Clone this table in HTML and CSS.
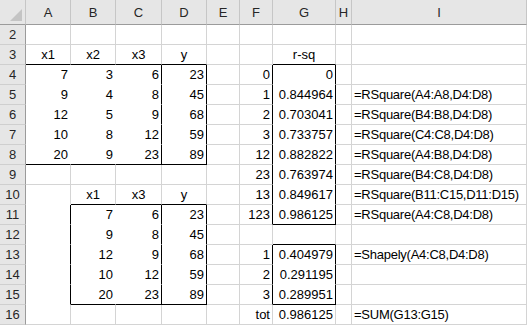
FILE: index.html
```html
<!DOCTYPE html>
<html>
<head>
    <title>Shapley - RSquare</title>
    <link rel="stylesheet" href="styles.css">
</head>
<body>
    <div class="sheet">
        <div class="row head">
            <div class="corner"><span class="tri"></span></div>
            <div class="col">A</div>
            <div class="col">B</div>
            <div class="col">C</div>
            <div class="col">D</div>
            <div class="col">E</div>
            <div class="col">F</div>
            <div class="col">G</div>
            <div class="col">H</div>
            <div class="col">I</div>
        </div>

        <div class="row">
            <div class="num">2</div>
            <div class="c"></div><div class="c"></div><div class="c"></div><div class="c"></div>
            <div class="c"></div><div class="c"></div><div class="c"></div><div class="c"></div><div class="c"></div>
        </div>

        <div class="row">
            <div class="num">3</div>
            <div class="c m kb">x1</div>
            <div class="c m kb">x2</div>
            <div class="c m kb">x3</div>
            <div class="c m kb">y</div>
            <div class="c"></div>
            <div class="c"></div>
            <div class="c m kb">r-sq</div>
            <div class="c"></div>
            <div class="c"></div>
        </div>

        <div class="row">
            <div class="num">4</div>
            <div class="c n f">7</div>
            <div class="c n f">3</div>
            <div class="c n f kr">6</div>
            <div class="c n f kr">23</div>
            <div class="c"></div>
            <div class="c n kr">0</div>
            <div class="c n f kr">0</div>
            <div class="c"></div>
            <div class="c"></div>
        </div>

        <div class="row">
            <div class="num">5</div>
            <div class="c n f">9</div>
            <div class="c n f">4</div>
            <div class="c n f kr">8</div>
            <div class="c n f kr">45</div>
            <div class="c"></div>
            <div class="c n kr">1</div>
            <div class="c n f kr">0.844964</div>
            <div class="c"></div>
            <div class="c t">=RSquare(A4:A8,D4:D8)</div>
        </div>

        <div class="row">
            <div class="num">6</div>
            <div class="c n f">12</div>
            <div class="c n f">5</div>
            <div class="c n f kr">9</div>
            <div class="c n f kr">68</div>
            <div class="c"></div>
            <div class="c n kr">2</div>
            <div class="c n f kr">0.703041</div>
            <div class="c"></div>
            <div class="c t">=RSquare(B4:B8,D4:D8)</div>
        </div>

        <div class="row">
            <div class="num">7</div>
            <div class="c n f">10</div>
            <div class="c n f">8</div>
            <div class="c n f kr">12</div>
            <div class="c n f kr">59</div>
            <div class="c"></div>
            <div class="c n kr">3</div>
            <div class="c n f kr">0.733757</div>
            <div class="c"></div>
            <div class="c t">=RSquare(C4:C8,D4:D8)</div>
        </div>

        <div class="row">
            <div class="num">8</div>
            <div class="c n f kb">20</div>
            <div class="c n f kb">9</div>
            <div class="c n f kr kb">23</div>
            <div class="c n f kr kb">89</div>
            <div class="c"></div>
            <div class="c n kr">12</div>
            <div class="c n f kr">0.882822</div>
            <div class="c"></div>
            <div class="c t">=RSquare(A4:B8,D4:D8)</div>
        </div>

        <div class="row">
            <div class="num">9</div>
            <div class="c"></div><div class="c"></div><div class="c"></div><div class="c"></div>
            <div class="c"></div>
            <div class="c n kr">23</div>
            <div class="c n f kr">0.763974</div>
            <div class="c"></div>
            <div class="c t">=RSquare(B4:C8,D4:D8)</div>
        </div>

        <div class="row">
            <div class="num">10</div>
            <div class="c hb"></div>
            <div class="c m kb">x1</div>
            <div class="c m kb">x3</div>
            <div class="c m kb">y</div>
            <div class="c"></div>
            <div class="c n kr">13</div>
            <div class="c n f kr">0.849617</div>
            <div class="c"></div>
            <div class="c t">=RSquare(B11:C15,D11:D15)</div>
        </div>

        <div class="row">
            <div class="num">11</div>
            <div class="c f kr"></div>
            <div class="c n f">7</div>
            <div class="c n f kr">6</div>
            <div class="c n f kr">23</div>
            <div class="c"></div>
            <div class="c n kr">123</div>
            <div class="c n f kr kb">0.986125</div>
            <div class="c"></div>
            <div class="c t">=RSquare(A4:C8,D4:D8)</div>
        </div>

        <div class="row">
            <div class="num">12</div>
            <div class="c f kr"></div>
            <div class="c n f">9</div>
            <div class="c n f kr">8</div>
            <div class="c n f kr">45</div>
            <div class="c"></div>
            <div class="c"></div>
            <div class="c kb"></div>
            <div class="c"></div>
            <div class="c"></div>
        </div>

        <div class="row">
            <div class="num">13</div>
            <div class="c f kr"></div>
            <div class="c n f">12</div>
            <div class="c n f kr">9</div>
            <div class="c n f kr">68</div>
            <div class="c"></div>
            <div class="c n kr">1</div>
            <div class="c n f kr">0.404979</div>
            <div class="c"></div>
            <div class="c t">=Shapely(A4:C8,D4:D8)</div>
        </div>

        <div class="row">
            <div class="num">14</div>
            <div class="c f kr"></div>
            <div class="c n f">10</div>
            <div class="c n f kr">12</div>
            <div class="c n f kr">59</div>
            <div class="c"></div>
            <div class="c n kr">2</div>
            <div class="c n f kr">0.291195</div>
            <div class="c"></div>
            <div class="c"></div>
        </div>

        <div class="row">
            <div class="num">15</div>
            <div class="c f kr"></div>
            <div class="c n f kb">20</div>
            <div class="c n f kr kb">23</div>
            <div class="c n f kr kb">89</div>
            <div class="c"></div>
            <div class="c n kr">3</div>
            <div class="c n f kr kb">0.289951</div>
            <div class="c"></div>
            <div class="c"></div>
        </div>

        <div class="row">
            <div class="num">16</div>
            <div class="c"></div><div class="c"></div><div class="c"></div><div class="c"></div>
            <div class="c"></div>
            <div class="c n">tot</div>
            <div class="c n">0.986125</div>
            <div class="c"></div>
            <div class="c t">=SUM(G13:G15)</div>
        </div>
    </div>
</body>
</html>
```

FILE: styles.css
```css
body {
    margin: 0;
    background: #fff;
}
.sheet {
    font-family: "Liberation Sans", Arial, sans-serif;
    font-size: 13px;
    color: #000;
    width: 527px;
}
.row {
    display: grid;
    grid-template-columns: 26px 45px 45px 46px 45px 33px 33px 63px 16px 175px;
    height: 20px;
}
.row.head {
    height: 25px;
}
.row > div {
    box-sizing: border-box;
    white-space: nowrap;
    overflow: hidden;
}

/* column / row headers */
.corner {
    background: #e6e6e6;
    border-right: 1px solid #c6c6c6;
    border-bottom: 1px solid #9b9b9b;
    position: relative;
}
.tri {
    position: absolute;
    right: 3px;
    bottom: 3px;
    width: 0;
    height: 0;
    border-left: 12px solid transparent;
    border-bottom: 12px solid #c4c4c4;
}
.col {
    background: #e6e6e6;
    border-right: 1px solid #c6c6c6;
    border-bottom: 1px solid #9b9b9b;
    color: #262626;
    text-align: center;
    line-height: 26px;
}
.num {
    background: #e6e6e6;
    border-right: 1px solid #9b9b9b;
    border-bottom: 1px solid #cfcfcf;
    color: #262626;
    text-align: center;
    line-height: 20px;
}

/* cells */
.c {
    border-right: 1px solid #d4d4d4;
    border-bottom: 1px solid #d4d4d4;
    padding: 0 2px;
    line-height: 19px;
}
.n {
    text-align: right;
}
.m {
    text-align: center;
}
.t {
    letter-spacing: -0.25px;
}
.f {
    border-color: #fff;
}
.hb {
    border-bottom-color: #fff;
}
.kr {
    border-right-color: #000;
}
.kb {
    border-bottom-color: #000;
}
```
